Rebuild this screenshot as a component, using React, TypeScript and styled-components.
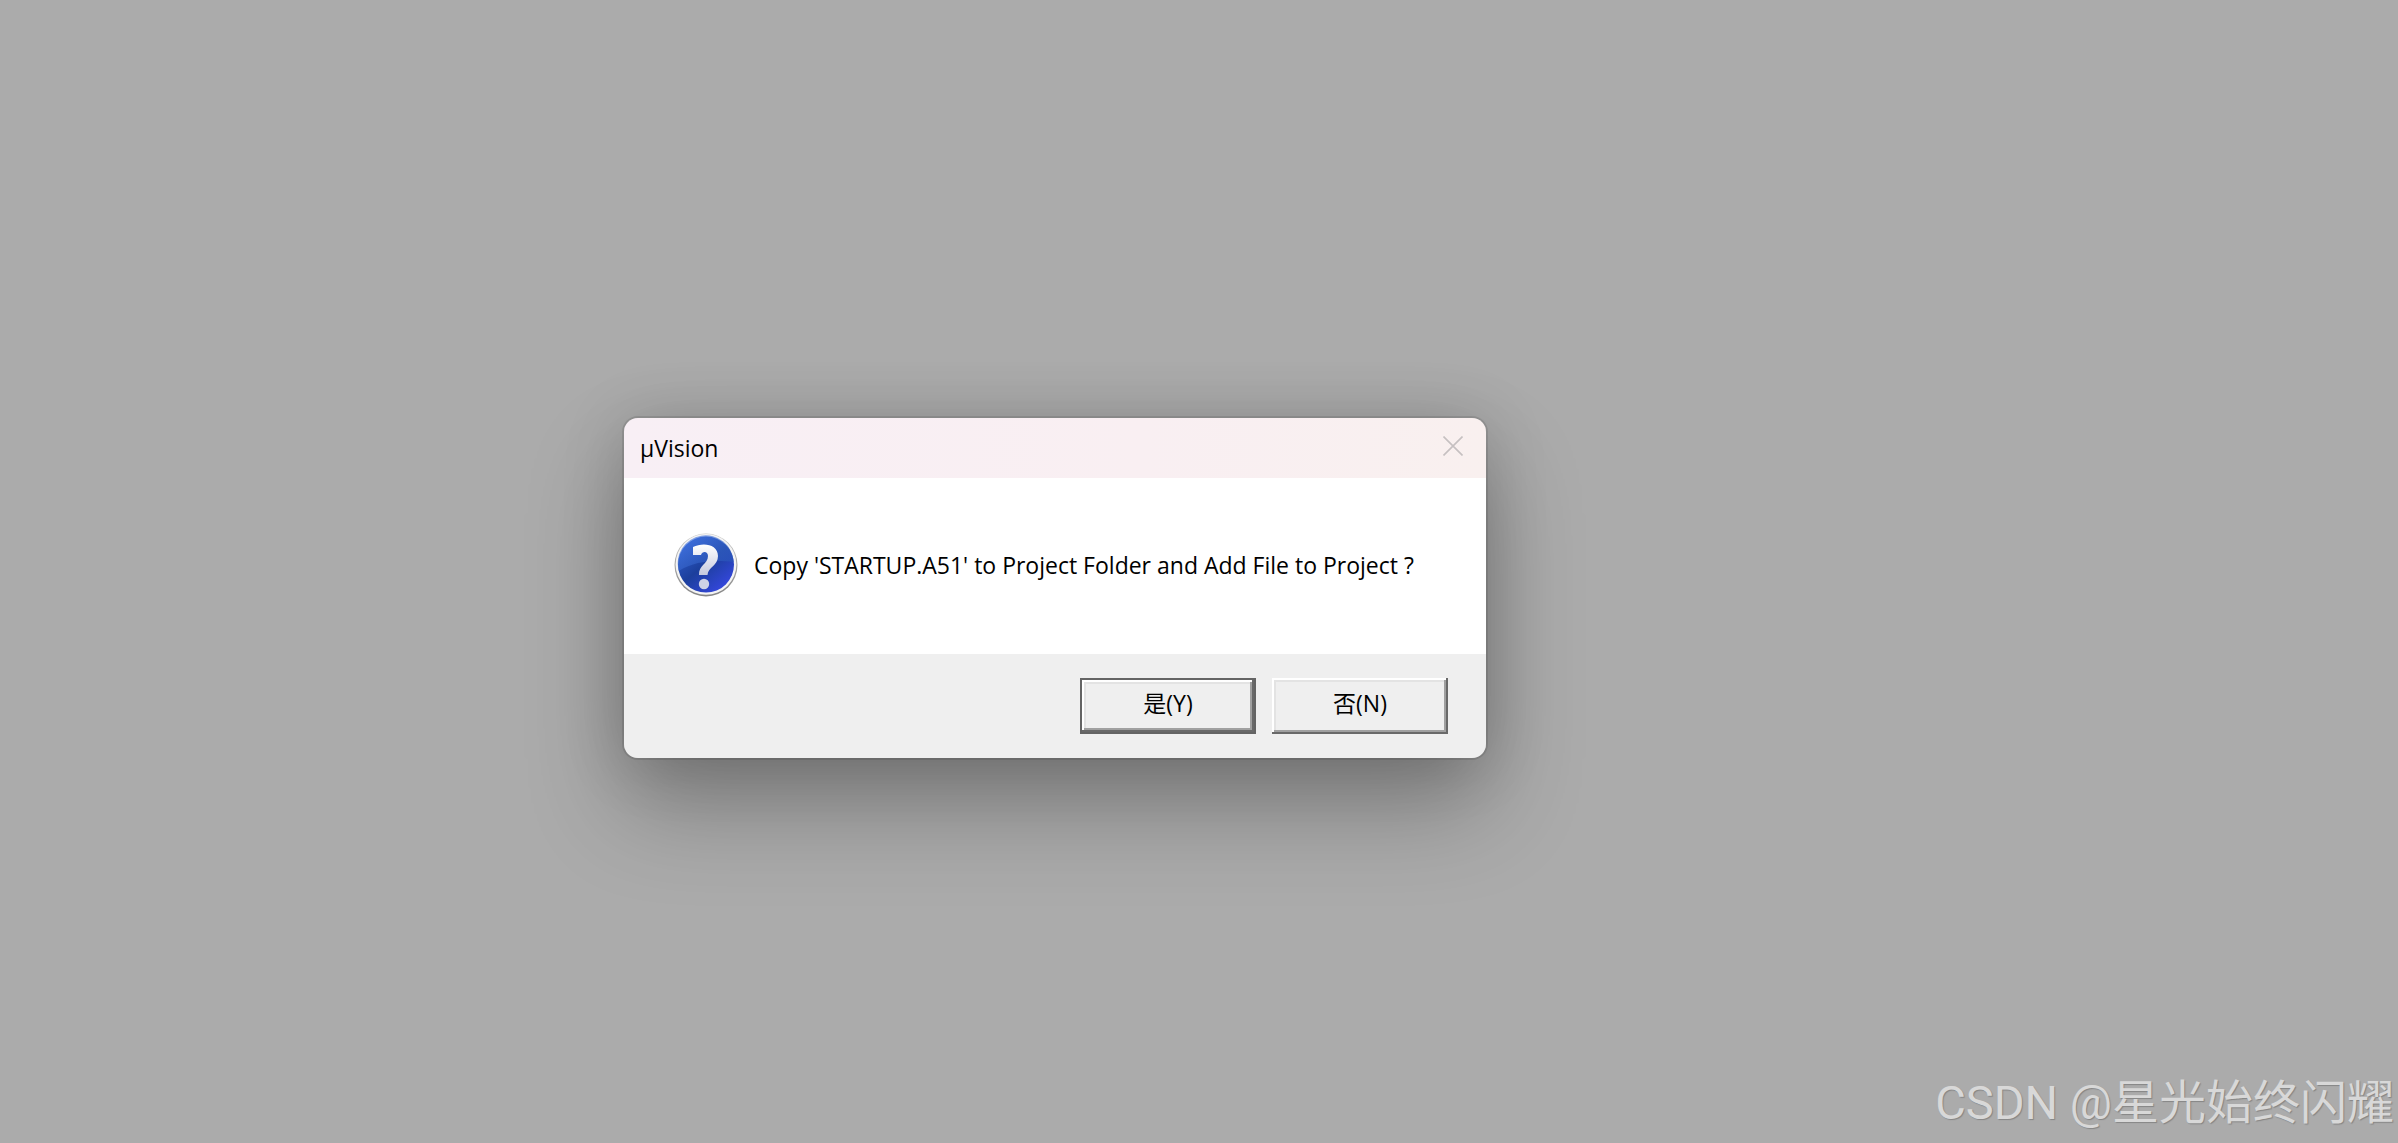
import React from "react";
import styled, { createGlobalStyle } from "styled-components";

const GlobalStyle = createGlobalStyle`
  *, *::before, *::after { box-sizing: border-box; }
  body {
    margin: 0;
    background: #ababab;
    color: #000;
    font-family: "Open Sans", "Noto Sans CJK SC", sans-serif;
    font-size: 23px;
    line-height: 30px;
  }
`;

const Desktop = styled.main`
  position: relative;
  min-height: 100vh;
  display: grid;
  grid-template-columns: 624fr auto 912fr;
  grid-template-rows: 418fr auto 385fr;
`;

const Dialog = styled.section`
  grid-area: 2 / 2;
  width: 862px;
  max-width: 100vw;
  border-radius: 14px;
  box-shadow:
    0 0 0 2px rgba(0, 0, 0, 0.1),
    0 4px 64px rgba(0, 0, 0, 0.16),
    0 48px 96px rgba(0, 0, 0, 0.28);
`;

const TitleBar = styled.header`
  display: flex;
  align-items: center;
  justify-content: space-between;
  height: 60px;
  padding: 0 16px;
  border-radius: 14px 14px 0 0;
  background: linear-gradient(90deg, #f8eff5, #f9eff2 60%, #f9f0ef);
`;

const Title = styled.h1`
  margin: 0;
  font-size: 23px;
  font-weight: 400;
`;

const CloseButton = styled.button`
  display: grid;
  place-items: center;
  width: 34px;
  height: 34px;
  margin-bottom: 4px;
  padding: 0;
  border: 0;
  background: none;
  color: #c6c0c1;
`;

const Body = styled.div`
  display: flex;
  align-items: center;
  gap: 16px;
  height: 176px;
  padding: 0 48px 2px;
  background: #fff;
`;

const Message = styled.p`
  margin: 0;
`;

const Footer = styled.footer`
  display: flex;
  justify-content: flex-end;
  gap: 16px;
  padding: 24px 38px;
  border-radius: 0 0 14px 14px;
  background: #efefef;
`;

const DialogButton = styled.button<{ $default?: boolean }>`
  width: 176px;
  height: 56px;
  padding: 0 0 6px;
  border: 0;
  background: #efefef;
  color: #000;
  font: inherit;
  box-shadow: ${({ $default }) =>
    $default
      ? `inset 0 0 0 2px #646464, inset -4px -4px #696969, inset 4px 4px #fff,
         inset -6px -6px #a0a0a0, inset 6px 6px #e3e3e3`
      : `inset -2px -2px #696969, inset 2px 2px #fff,
         inset -4px -4px #a0a0a0, inset 4px 4px #e3e3e3`};
`;

const Watermark = styled.div`
  position: absolute;
  right: 4px;
  bottom: 8px;
  font-family: Roboto, "Noto Sans CJK SC", sans-serif;
  font-size: 47px;
  font-weight: 400;
  line-height: 64px;
  white-space: nowrap;
  color: #d8d8d8;
  text-shadow: 1px 1px 1px #858585;
`;

function CloseIcon() {
  return (
    <svg width="20" height="20" viewBox="0 0 20 20" aria-hidden="true">
      <path d="M.5.5l19 19M19.5.5l-19 19" stroke="currentColor" strokeWidth="1.6" />
    </svg>
  );
}

function QuestionIcon() {
  return (
    <svg width="66" height="66" viewBox="0 0 66 66" aria-hidden="true">
      <defs>
        <linearGradient id="rim" x1="0" y1="0" x2="0" y2="1">
          <stop offset="0" stopColor="#c8c8c8" />
          <stop offset="1" stopColor="#858585" />
        </linearGradient>
        <linearGradient id="ball" x1=".1" y1=".1" x2=".8" y2=".95">
          <stop offset="0" stopColor="#2f5fcf" />
          <stop offset=".5" stopColor="#1c3f9c" />
          <stop offset="1" stopColor="#3547de" />
        </linearGradient>
        <linearGradient id="gloss" x1="0" y1="0" x2="1" y2="1">
          <stop offset="0" stopColor="#4a7cea" />
          <stop offset="1" stopColor="#2450b0" />
        </linearGradient>
        <linearGradient id="mark" x1="0" y1="0" x2="0" y2="1">
          <stop offset="0" stopColor="#fff" />
          <stop offset="1" stopColor="#c6cade" />
        </linearGradient>
      </defs>
      <circle cx="34" cy="33" r="31.5" fill="url(#rim)" />
      <circle cx="34" cy="32.4" r="30.4" fill="#f4f4f4" />
      <circle cx="34" cy="32.6" r="28" fill="url(#ball)" />
      <path d="M6.800 39a28 28 0 1 1 54.9-9C45 28 24 28 6.800 39z" fill="url(#gloss)" opacity=".65" />
      <path
        d="M21 15C31 10 46 12 46 24C46 34 36 35 35.500 43H27C26.500 33 36 32 36 24C36 19 30 19 29 23H21Z"
        fill="url(#mark)"
      />
      <circle cx="32" cy="52" r="5.2" fill="#cfd3e6" />
    </svg>
  );
}

export default function App() {
  return (
    <>
      <GlobalStyle />
      <Desktop>
        <Dialog role="dialog" aria-labelledby="dialog-title" aria-describedby="dialog-message">
          <TitleBar>
            <Title id="dialog-title">µVision</Title>
            <CloseButton type="button" aria-label="Close">
              <CloseIcon />
            </CloseButton>
          </TitleBar>
          <Body>
            <QuestionIcon />
            <Message id="dialog-message">
              Copy 'STARTUP.A51' to Project Folder and Add File to Project ?
            </Message>
          </Body>
          <Footer>
            <DialogButton type="button" $default>是(Y)</DialogButton>
            <DialogButton type="button">否(N)</DialogButton>
          </Footer>
        </Dialog>
        <Watermark>CSDN @星光始终闪耀</Watermark>
      </Desktop>
    </>
  );
}
